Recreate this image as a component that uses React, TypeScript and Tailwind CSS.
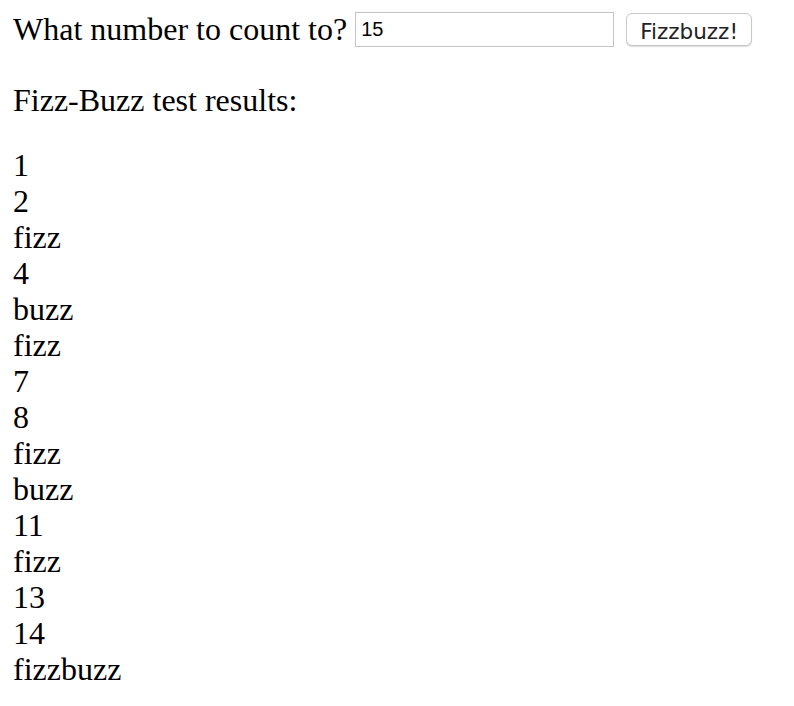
import React from "react";

const results = ["1","2","fizz","4","buzz","fizz","7","8","fizz","buzz","11","fizz","13","14","fizzbuzz"];

export default function App() {
  return (
    <div className="bg-white text-black min-h-[706px] px-[13px] pt-[11px] text-[32px] leading-[36px] [font-family:'Liberation_Serif','Times_New_Roman',serif]">
      <div className="flex items-center h-[36px]">
        <span>What number to count to?</span>
        <input
          readOnly
          value="15"
          className="ml-[8px] w-[259px] h-[35px] border border-[#c4c4c4] bg-white px-[5px] text-[20px] text-black outline-none [font-family:'Liberation_Sans',Arial,sans-serif]"
        />
        <button className="ml-[12px] h-[33px] w-[126px] rounded-[6px] border border-[#c8c8c8] bg-white text-[21.5px] text-[#222] shadow-[0_1px_1px_rgba(0,0,0,0.15)] [font-family:'DejaVu_Sans',Verdana,sans-serif]">
          Fizzbuzz!
        </button>
      </div>
      <div className="mt-[35px]">Fizz-Buzz test results:</div>
      <div className="mt-[29px]">
        {results.map((r, i) => (
          <div key={i}>{r}</div>
        ))}
      </div>
    </div>
  );
}
